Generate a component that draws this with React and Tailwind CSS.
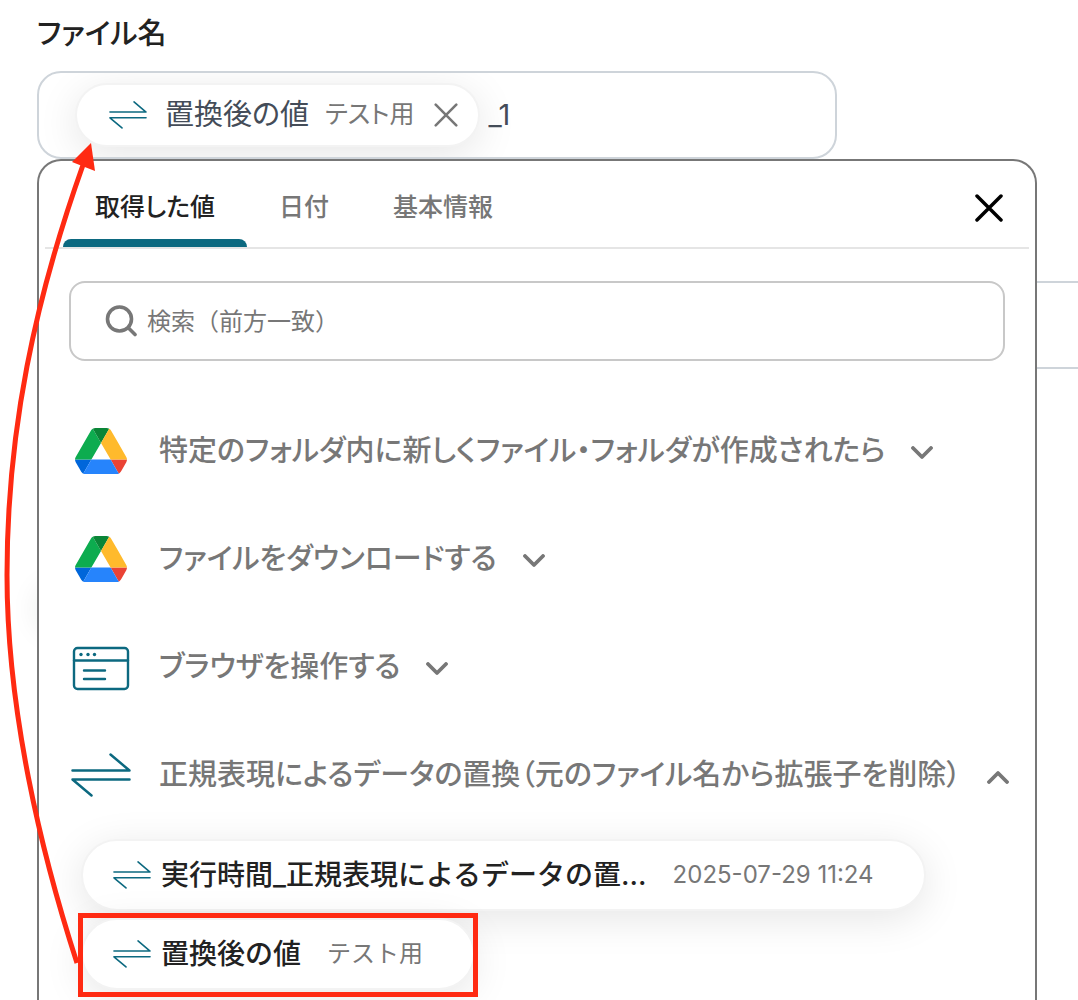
import React, { useState } from "react";

const TABS = ["取得した値", "日付", "基本情報"];

const OPERATIONS = [
  { icon: "drive", title: "特定のフォルダ内に新しくファイル・フォルダが作成されたら" },
  { icon: "drive", title: "ファイルをダウンロードする" },
  { icon: "browser", title: "ブラウザを操作する" },
  {
    icon: "swap",
    title: "正規表現によるデータの置換（元のファイル名から拡張子を削除）",
    values: [
      { name: "実行時間_正規表現によるデータの置…", sample: "2025-07-29 11:24" },
      { name: "置換後の値", sample: "テスト用", selected: true },
    ],
  },
];

function DriveIcon() {
  return (
    <svg viewBox="0 0 87.3 78" className="w-[52px]" aria-hidden="true">
      <path d="m6.6 66.85 3.85 6.65c.8 1.4 1.95 2.5 3.3 3.3l13.75-23.8h-27.5c0 1.55.4 3.1 1.2 4.5z" fill="#0066da" />
      <path d="m43.65 25-13.75-23.8c-1.35.8-2.5 1.9-3.3 3.3l-25.4 44a9.06 9.06 0 0 0 -1.2 4.5h27.5z" fill="#0dac4f" />
      <path d="m73.55 76.8c1.35-.8 2.5-1.9 3.3-3.3l1.6-2.75 7.65-13.25c.8-1.4 1.2-2.95 1.2-4.5h-27.502l13.752 23.8z" fill="#ea4335" />
      <path d="m43.65 25 13.75-23.8c-1.35-.8-2.9-1.2-4.5-1.2h-18.5c-1.6 0-3.15.45-4.5 1.2z" fill="#0a8537" />
      <path d="m59.8 53h-32.3l-13.75 23.8c1.35.8 2.9 1.2 4.5 1.2h50.8c1.6 0 3.15-.45 4.5-1.2z" fill="#2684fc" />
      <path d="m73.4 26.5-12.7-22c-.8-1.4-1.95-2.5-3.3-3.3l-13.75 23.8 16.15 28h27.45c0-1.55-.4-3.1-1.2-4.5z" fill="#ffba2c" />
    </svg>
  );
}

function BrowserIcon() {
  return (
    <svg viewBox="0 0 58 46" className="mt-[3px] w-[58px]" fill="none" stroke="#0c6980" strokeWidth="2.4" strokeLinecap="round" aria-hidden="true">
      <rect x="2" y="2" width="54" height="41" rx="3.5" />
      <path d="M2 14.500h54M12 24.500h21M12 33h21" />
      <g fill="#0c6980" stroke="none">
        <circle cx="9" cy="8.500" r="1.700" />
        <circle cx="16" cy="8.500" r="1.700" />
        <circle cx="22.500" cy="8.500" r="1.700" />
      </g>
    </svg>
  );
}

function SwapIcon({ className }) {
  return (
    <svg viewBox="0 0 60 44" className={className} fill="none" stroke="#0c6980" strokeWidth="2.5" strokeLinecap="round" strokeLinejoin="round" aria-hidden="true">
      <path d="M1.500 17.500h57l-19-16" />
      <path d="M58.500 26.500h-57l19 16" />
    </svg>
  );
}

function CloseIcon({ className, strokeWidth }) {
  return (
    <svg viewBox="0 0 28 28" className={className} fill="none" stroke="currentColor" strokeWidth={strokeWidth} strokeLinecap="round" aria-hidden="true">
      <path d="M2 2l24 24M26 2L2 26" />
    </svg>
  );
}

function ChevronIcon({ open }) {
  return (
    <svg viewBox="0 0 22 14" className="mt-1 w-[22px] shrink-0" fill="none" stroke="#777" strokeWidth="3.8" strokeLinecap="round" strokeLinejoin="round" aria-hidden="true">
      <path d={open ? "M2 12l9-9 9 9" : "M2 2l9 9 9-9"} />
    </svg>
  );
}

function SearchIcon() {
  return (
    <svg viewBox="0 0 32 32" className="w-8 shrink-0" fill="none" stroke="#777" strokeWidth="3.600" strokeLinecap="round" aria-hidden="true">
      <circle cx="14.500" cy="14" r="12" />
      <path d="M23.500 23l6.500 6.500" />
    </svg>
  );
}

// 選択したタグを指す赤い矢印
function GuideArrow() {
  return (
    <svg viewBox="0 0 100 840" className="pointer-events-none absolute top-[140px] left-0 z-20 w-[100px]" aria-hidden="true">
      <path d="M77 823C41 712 7 570 7 435C7 290 35 160 83 25" fill="none" stroke="#ff2a12" strokeWidth="5" />
      <path d="M91 3L95 31L72 22z" fill="#ff2a12" />
    </svg>
  );
}

function OperationIcon({ type }) {
  if (type === "drive") return <DriveIcon />;
  if (type === "browser") return <BrowserIcon />;
  return <SwapIcon className="w-[60px]" />;
}

function ValueChip({ value }) {
  return (
    <li className="relative w-fit">
      <button
        type="button"
        className="flex h-[72px] items-center rounded-full border-2 border-[#f3f3f3] bg-white pr-[50px] pl-[30px] shadow-[0_8px_40px_rgba(0,0,0,0.10)]"
      >
        <SwapIcon className="mr-[10px] w-[38px]" />
        <span className="text-[28px] font-medium whitespace-nowrap text-[#222]">{value.name}</span>
        <span className="ml-[26px] text-[24px] whitespace-nowrap text-[#777]">{value.sample}</span>
      </button>
      {value.selected && (
        <div className="pointer-events-none absolute -top-[5px] -right-[3px] -bottom-[7px] -left-[3px] border-5 border-[#ff2a12]" />
      )}
    </li>
  );
}

export default function App() {
  const [tab, setTab] = useState(0);
  const [suffix, setSuffix] = useState("_1");
  const [keyword, setKeyword] = useState("");
  const [openIndex, setOpenIndex] = useState(3);

  return (
    <div className="relative flex h-screen flex-col overflow-hidden bg-white pl-[37px] font-['Inter','Noto_Sans_CJK_JP',sans-serif]">
      <label
        htmlFor="file-name"
        className="mt-3 mb-[15px] w-fit text-[29px] leading-[44px] font-medium text-[#222] [font-feature-settings:'palt']"
      >
        ファイル名
      </label>

      {/* 入力欄 */}
      <div className="flex h-[88px] max-w-[800px] shrink-0 items-center overflow-hidden rounded-3xl border-2 border-[#ced4da] pl-9 text-[29px] text-[#444c58]">
        <div className="flex h-16 shrink-0 items-center rounded-full border-2 border-[#f3f3f3] bg-white pr-5 pl-8 shadow-[0_8px_40px_rgba(0,0,0,0.10)] [font-feature-settings:'palt']">
          <SwapIcon className="mr-[18px] w-[38px]" />
          <span>置換後の値</span>
          <span className="ml-4 text-[25px] text-[#777]">テスト用</span>
          <button type="button" aria-label="削除" className="ml-5 text-[#777]">
            <CloseIcon className="w-6" strokeWidth={3} />
          </button>
        </div>
        <input
          id="file-name"
          type="text"
          value={suffix}
          onChange={(e) => setSuffix(e.target.value)}
          className="ml-2 min-w-0 flex-1 bg-transparent outline-none"
        />
      </div>

      <div className="grid min-h-0 flex-1 grid-cols-1">
        {/* パネルの後ろにあるフォーム */}
        <div className="col-start-1 row-start-1 pt-[122px]">
          <div className="h-[88px] border-y-2 border-[#ced4da]" />
          <div className="mt-[216px] mr-20 h-12 rounded-full shadow-[0_0_30px_rgba(0,40,30,0.09)]" />
        </div>

        {/* 値の選択パネル */}
        <div className="z-10 col-start-1 row-start-1 mr-[41px] rounded-t-3xl border-2 border-b-0 border-[#777] bg-white">
          <div className="mx-1.5 flex h-[88px] items-center border-b-2 border-[#e5e5e5] pt-2 pr-[26px] pl-[18px]">
            <div role="tablist" className="flex flex-1 self-stretch">
              {TABS.map((name, i) => (
                <button
                  key={name}
                  type="button"
                  role="tab"
                  aria-selected={tab === i}
                  onClick={() => setTab(i)}
                  className={`relative px-8 text-[25px] font-medium [font-feature-settings:'palt'] ${
                    tab === i ? "text-[#222]" : "text-[#777]"
                  }`}
                >
                  {name}
                  {tab === i && <span className="absolute inset-x-0 bottom-0 h-2 rounded-t-lg bg-[#0c6980]" />}
                </button>
              ))}
            </div>
            <button type="button" aria-label="閉じる" className="text-black">
              <CloseIcon className="w-7" strokeWidth={3.5} />
            </button>
          </div>

          <div className="mx-[30px] mt-8 flex h-20 items-center gap-[10px] rounded-2xl border-2 border-[#c8c8c8] px-[34px]">
            <SearchIcon />
            <input
              type="search"
              aria-label="検索"
              placeholder="検索（前方一致）"
              value={keyword}
              onChange={(e) => setKeyword(e.target.value)}
              className="min-w-0 flex-1 bg-transparent pt-0.5 text-[24px] text-[#222] outline-none placeholder:text-[#777]"
            />
          </div>

          <ul className="mt-9 pl-8">
            {OPERATIONS.map((op, i) => (
              <li key={op.title}>
                <button
                  type="button"
                  aria-expanded={openIndex === i}
                  onClick={() => setOpenIndex(openIndex === i ? -1 : i)}
                  className="flex h-[108px] items-center"
                >
                  <span className="mr-7 flex w-[60px] shrink-0 justify-center">
                    <OperationIcon type={op.icon} />
                  </span>
                  <span className="mr-[26px] text-[29px] font-medium whitespace-nowrap text-[#777] [font-feature-settings:'palt']">
                    {op.title}
                  </span>
                  <ChevronIcon open={openIndex === i} />
                </button>
                {openIndex === i && op.values && (
                  <ul className="flex flex-col gap-[7px] pt-2.5 pl-2.5">
                    {op.values.map((value) => (
                      <ValueChip key={value.name} value={value} />
                    ))}
                  </ul>
                )}
              </li>
            ))}
          </ul>
        </div>
      </div>

      <GuideArrow />
    </div>
  );
}
